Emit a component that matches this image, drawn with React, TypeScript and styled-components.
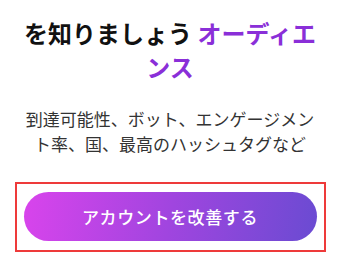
import React from 'react'
import styled, { createGlobalStyle } from 'styled-components'

const GlobalStyle = createGlobalStyle`
  body {
    margin: 0;
    background: #ffffff;
    font-family: "Noto Sans CJK JP", "Noto Sans", sans-serif;
  }
`

const Page = styled.div`
  width: 340px;
  height: 278px;
  padding: 16px 20px 0;
  box-sizing: border-box;
  display: flex;
  flex-direction: column;
  align-items: center;
  overflow: hidden;
`

const Title = styled.h2`
  margin: 0;
  width: 300px;
  font-size: 24px;
  line-height: 34px;
  font-weight: 700;
  color: #111111;
  text-align: center;
`

const Accent = styled.span`
  color: #8a2fd8;
`

const Lead = styled.p`
  margin: 22px 0 0;
  width: 300px;
  font-size: 17px;
  line-height: 25px;
  color: #333333;
  text-align: center;
`

const Highlight = styled.div`
  margin-top: 26px;
  width: 311px;
  box-sizing: border-box;
  border: 2px solid #ee3a3a;
  padding: 8px 7px 9px;
`

const CtaButton = styled.button`
  display: flex;
  align-items: center;
  justify-content: center;
  width: 100%;
  height: 49px;
  border: none;
  border-radius: 25px;
  background: linear-gradient(100deg, #d944ec 0%, #a045df 50%, #6a4bd2 100%);
  color: #ffffff;
  font-family: inherit;
  font-size: 17px;
  font-weight: 500;
  letter-spacing: 0.6px;
  cursor: pointer;
`

export default function App() {
  return (
    <>
      <GlobalStyle />
      <Page>
        <Title>
          を知りましょう <Accent>オーディエンス</Accent>
        </Title>
        <Lead>到達可能性、ボット、エンゲージメント率、国、最高のハッシュタグなど</Lead>
        <Highlight>
          <CtaButton>アカウントを改善する</CtaButton>
        </Highlight>
      </Page>
    </>
  )
}
